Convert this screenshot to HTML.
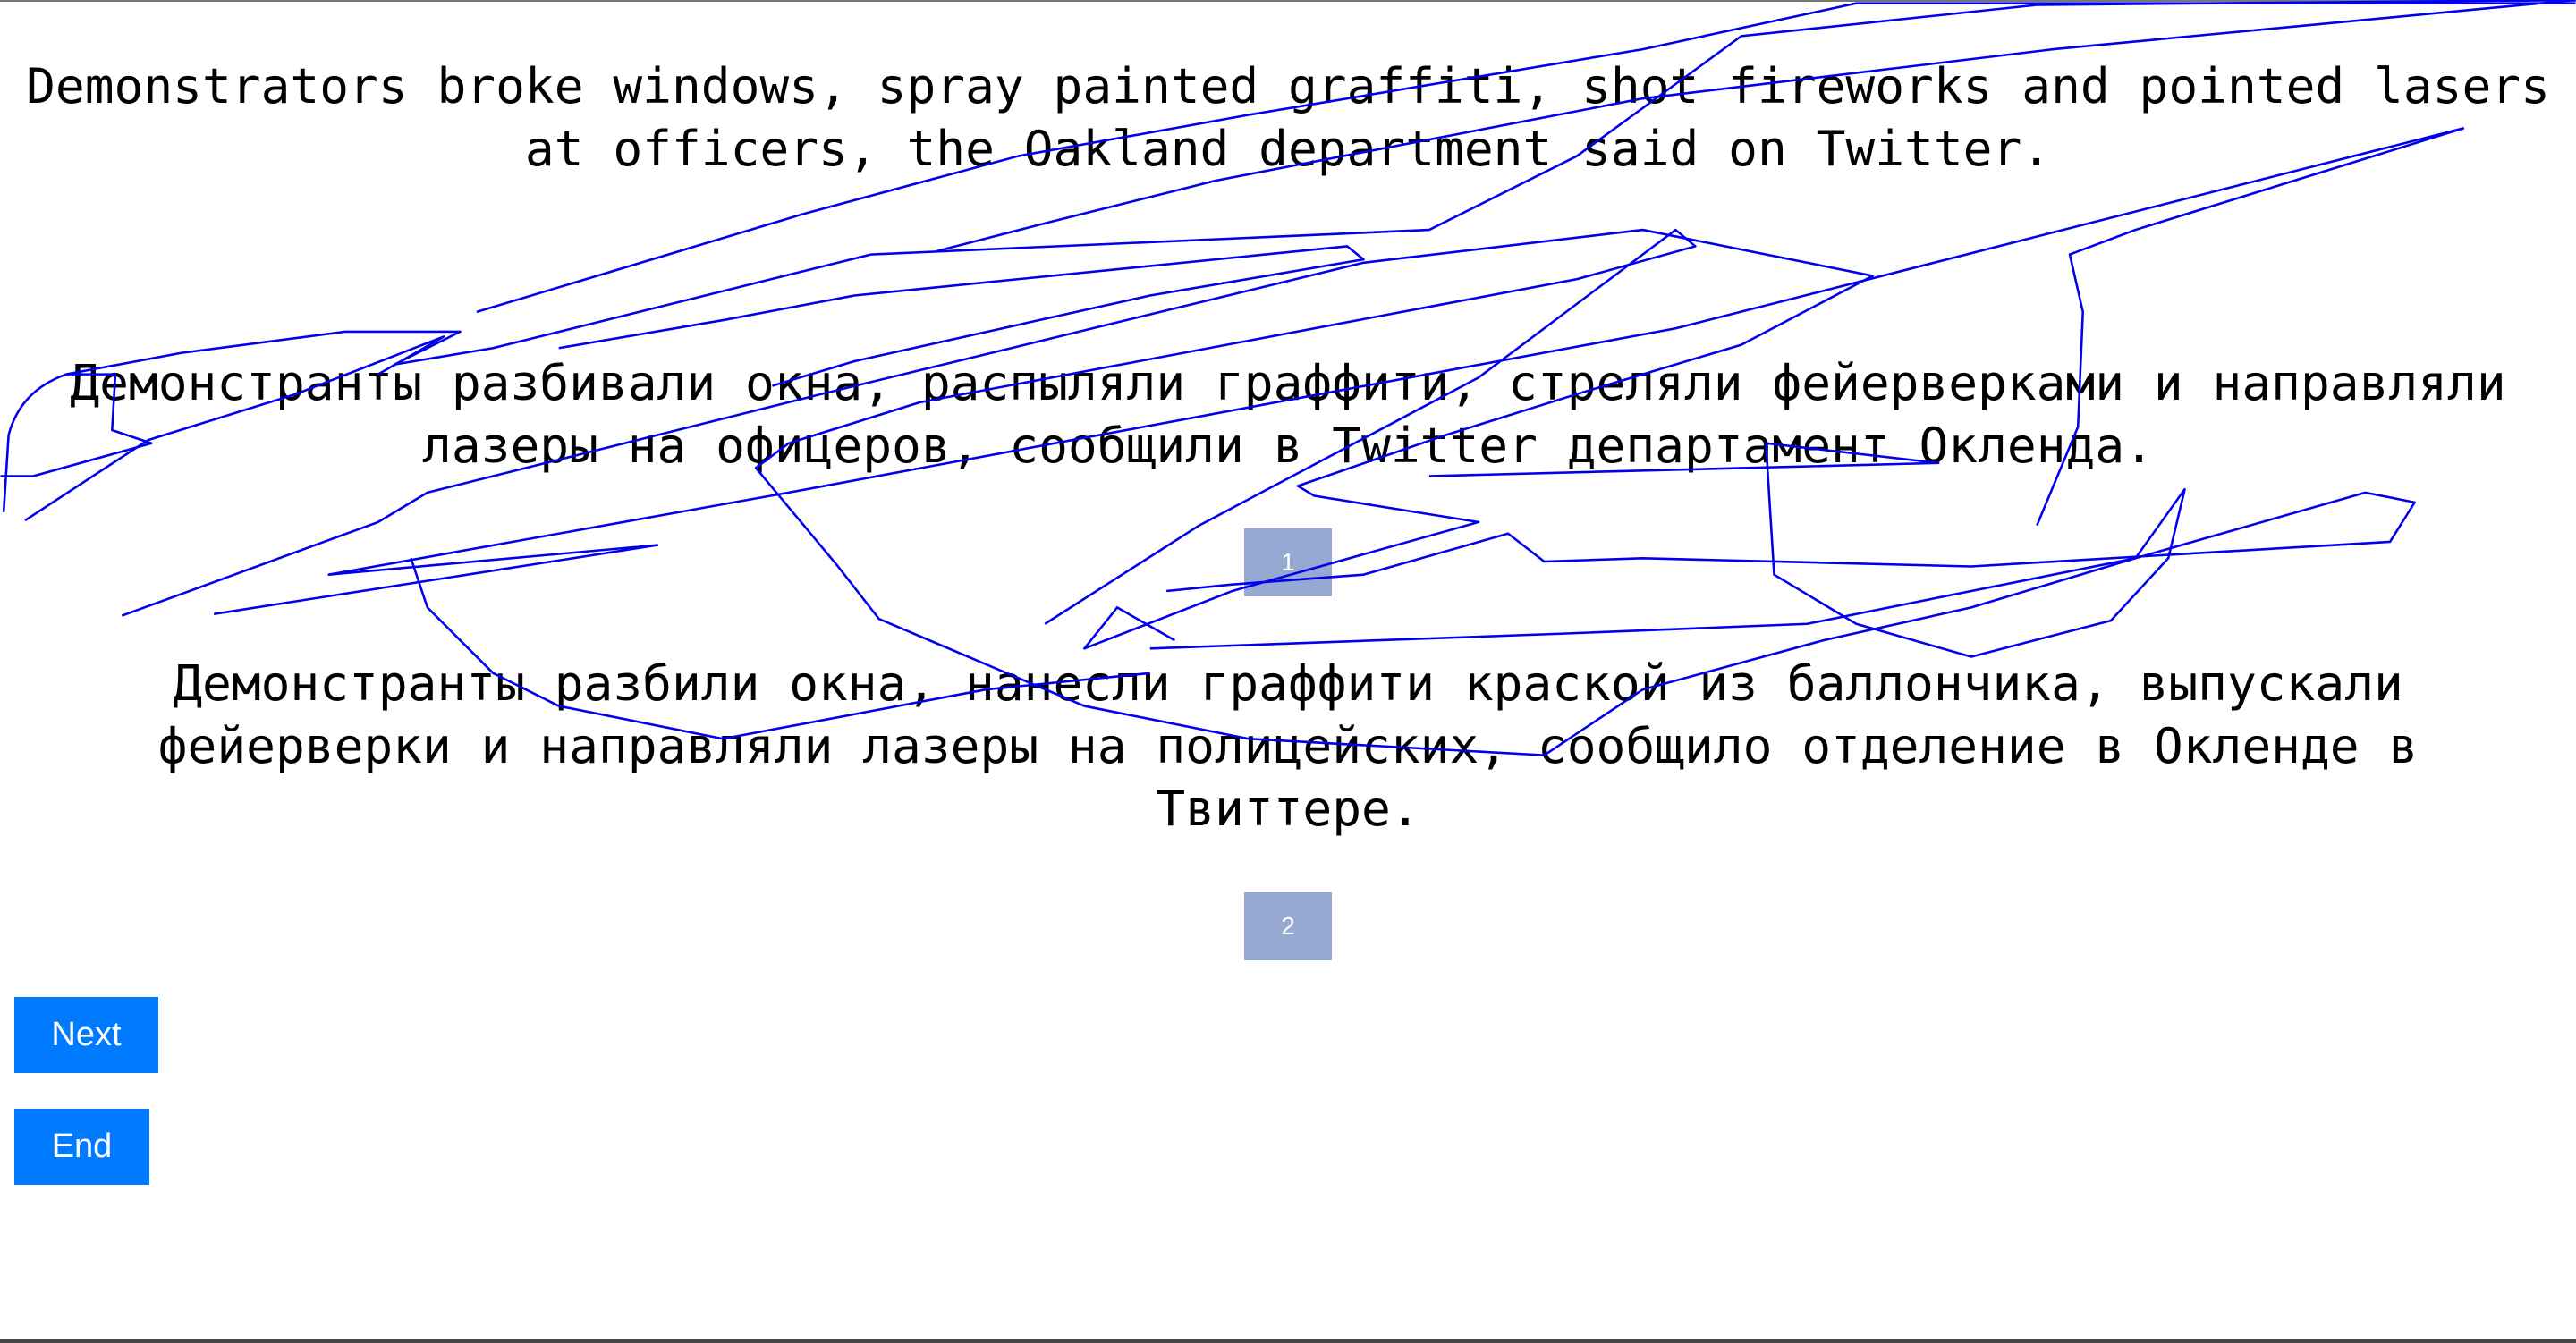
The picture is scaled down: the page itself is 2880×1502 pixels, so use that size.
<!DOCTYPE html>
<html><head><meta charset="utf-8"><style>
html,body{margin:0;padding:0;width:2880px;height:1502px;overflow:hidden;background:#fff;position:relative}
.top{position:absolute;left:0;top:0;width:2880px;height:2px;background:#777}
.bot{position:absolute;left:0;top:1498px;width:2880px;height:4px;background:#444}
.t{position:absolute;left:20px;width:2840px;text-align:center;font-family:"DejaVu Sans Mono","Liberation Mono",monospace;font-size:54.5px;line-height:70px;color:#000;margin:0}
.box{position:absolute;left:1391px;width:98px;height:76px;background:#95a9d2;color:#fff;font-family:"Liberation Sans",sans-serif;font-size:28px;display:flex;align-items:center;justify-content:center}
.btn{position:absolute;left:16px;height:85px;background:#007bff;color:#fff;font-family:"Liberation Sans",sans-serif;font-size:38px;display:flex;align-items:center;justify-content:center}
svg{position:absolute;left:0;top:0}
</style></head><body>
<div class="top"></div>
<p class="t" style="top:61px">Demonstrators broke windows, spray painted graffiti, shot fireworks and pointed lasers at officers, the Oakland department said on Twitter.</p>
<p class="t" style="top:393px">Демонстранты разбивали окна, распыляли граффити, стреляли фейерверками и направляли лазеры на офицеров, сообщили в Twitter департамент Окленда.</p>
<div class="box" style="top:591px">1</div>
<p class="t" style="top:729px">Демонстранты разбили окна, нанесли граффити краской из баллончика, выпускали фейерверки и направляли лазеры на полицейских, сообщило отделение в Окленде в Твиттере.</p>
<div class="box" style="top:998px">2</div>
<div class="btn" style="top:1115px;width:161px">Next</div>
<div class="btn" style="top:1240px;width:151px">End</div>
<div class="bot"></div>
<svg width="2880" height="1502" viewBox="0 0 1568 818">
<g fill="none" stroke="#0000ee" stroke-width="1.4" stroke-linejoin="round">
<path d="M2 312 L5 265 Q12 238 40 228 L110 215 L210 202 L280 202 L240 222 L300 212 L530 155 L870 140 L960 95 L1060 22 L1240 3 L1568 0"/>
<path d="M15 317 L90 268 L180 240 L270 205 L230 228"/>
<path d="M74 375 L230 318 L260 300 L500 240 L830 160 L1000 140 L1140 168 L1060 210 L960 240 L880 265 L790 296 L800 302 L900 318 L750 360 L660 395 L680 370 L715 390"/>
<path d="M130 374 L400 332 L200 350 L480 300 L1020 200 L1500 78"/>
<path d="M570 153 L640 135 L740 110 L1000 60 L1250 30 L1568 0"/>
<path d="M290 190 L490 130 L620 95 L760 70 L1000 30 L1130 2 L1568 2"/>
<path d="M636 380 L730 320 L900 230 L1020 140 L1032 150 L960 170 L880 185 L560 245 L480 270 L460 285 L510 345 L535 377 L660 430 L760 450 L940 460 L1000 420 L1110 390 L1200 370 L1300 340 L1330 298 L1320 340 L1285 378 L1200 400 L1130 380 L1080 350 L1075 270 L1180 282 L870 290"/>
<path d="M700 395 L950 386 L1100 380 L1150 370 L1300 340 L1440 300 L1470 306 L1455 330 L1200 345 L1000 340 L940 342 L918 325 L830 350 L750 356 L710 360"/>
<path d="M1500 78 L1300 140 L1260 155 L1268 190 L1265 260 L1240 320"/>
<path d="M250 340 L260 370 L300 410 L340 430 L440 450 L600 420 L700 410"/>
<path d="M40 228 L70 228 L68 262 L92 270 L20 290 L0 290"/>
<path d="M340 212 L440 195 L520 180 L620 170 L820 150 L830 158 L700 180 L520 220 L470 235"/>
</g></svg>
</body></html>
